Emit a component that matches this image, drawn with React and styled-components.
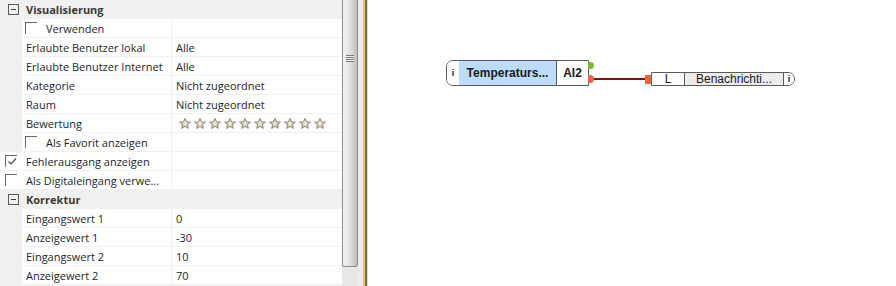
import React from "react";
import styled, { createGlobalStyle } from "styled-components";

const GlobalStyle = createGlobalStyle`
  html, body {
    margin: 0;
    padding: 0;
    background: #ffffff;
    overflow: hidden;
  }
  body {
    font-family: "Open Sans", "Noto Sans", sans-serif;
  }
`;

const Page = styled.div`
  display: flex;
  width: 896px;
  height: 286px;
  overflow: hidden;
`;

const Grid = styled.div`
  width: 342px;
  height: 286px;
  background: #f0f0f0;
  display: flex;
  flex-direction: column;
  font-size: 11px;
  color: #1e1e2a;
`;

const CategoryRow = styled.div`
  height: 19px;
  display: flex;
  align-items: center;
  flex-shrink: 0;
`;

const Toggle = styled.span`
  width: 9px;
  height: 9px;
  margin: 0 7px 0 8px;
  border: 1px solid #5a5a5a;
  position: relative;
  &::after {
    content: "";
    position: absolute;
    left: 2px;
    right: 2px;
    top: 4px;
    height: 1px;
    background: #3a3a3a;
  }
`;

const CategoryTitle = styled.span`
  font-weight: 700;
  color: #3b3935;
`;

const Row = styled.div`
  height: 19px;
  display: flex;
  flex-shrink: 0;
`;

const Indent = styled.div`
  width: ${(p) => (p.$top ? 0 : 22)}px;
  background: #f0f0f0;
`;

const NameCell = styled.div`
  width: ${(p) => (p.$top ? 172 : 150)}px;
  height: 19px;
  box-sizing: border-box;
  border-right: 1px solid #f0f0f0;
  border-bottom: 1px solid #f0f0f0;
  background: #ffffff;
  display: flex;
  align-items: center;
  padding-left: ${(p) => p.$pad}px;
  white-space: nowrap;
  overflow: hidden;
`;

const ValueCell = styled.div`
  flex: 1;
  height: 19px;
  box-sizing: border-box;
  border-bottom: 1px solid #f0f0f0;
  background: #ffffff;
  display: flex;
  align-items: center;
  padding-left: 4px;
`;

const Check = styled.span`
  width: 11px;
  height: 11px;
  border-top: 1px solid #6a6a6a;
  border-left: 1px solid #6a6a6a;
  margin-right: ${(p) => p.$gap}px;
  display: flex;
  align-items: center;
  justify-content: center;
  flex-shrink: 0;
`;

const Stars = styled.div`
  display: flex;
  gap: 3px;
  padding-left: 3px;
`;

const Scrollbar = styled.div`
  width: 16px;
  height: 286px;
  background: #e8e8e8;
  display: flex;
  flex-direction: column;
`;

const Thumb = styled.div`
  height: 269px;
  margin-top: -2px;
  box-sizing: border-box;
  border: 1px solid #8c8c8c;
  border-radius: 2px;
  background: linear-gradient(to right, #f3f3f3 0%, #e6e6e6 40%, #cfcfcf 75%, #bdbdbd 100%);
  display: flex;
  justify-content: center;
  padding-top: 56px;
`;

const Grip = styled.div`
  width: 8px;
  height: 7px;
  background: repeating-linear-gradient(to bottom, #7a7a7a 0 1px, #f0f0f0 1px 2px);
`;

const Splitter = styled.div`
  width: 10px;
  height: 286px;
  display: flex;
`;

const SplitPart = styled.div`
  width: ${(p) => p.$w}px;
  background: ${(p) => p.$c};
`;

const Canvas = styled.div`
  flex: 1;
  height: 286px;
  background: #ffffff;
  position: relative;
  font-family: "Liberation Sans", Arial, sans-serif;
  font-size: 12px;
  color: #1a1a1a;
`;

const Block = styled.div`
  position: absolute;
  left: ${(p) => p.$x}px;
  top: ${(p) => p.$y}px;
  height: ${(p) => p.$h}px;
  display: flex;
  border: 1px solid #5a5a5a;
  border-radius: ${(p) => p.$radius};
  overflow: hidden;
  box-sizing: border-box;
`;

const Section = styled.div`
  width: ${(p) => p.$w}px;
  background: ${(p) => p.$bg || "#ffffff"};
  border-left: ${(p) => (p.$divider ? "1px solid #5a5a5a" : "none")};
  display: flex;
  align-items: center;
  justify-content: center;
  font-weight: ${(p) => (p.$bold ? 700 : 400)};
  white-space: nowrap;
`;

const InfoDot = styled.span`
  font-weight: 700;
  font-size: 9px;
  font-family: "Liberation Sans", Arial, sans-serif;
`;

const Pin = styled.div`
  position: absolute;
  left: ${(p) => p.$x}px;
  top: ${(p) => p.$y}px;
  width: ${(p) => p.$w}px;
  height: ${(p) => p.$h}px;
  border-radius: ${(p) => p.$r};
  background: ${(p) => p.$c};
`;

const Wire = styled.div`
  position: absolute;
  left: ${(p) => p.$x}px;
  top: ${(p) => p.$y}px;
  width: ${(p) => p.$w}px;
  height: 2px;
  background: #8b0a0a;
`;

function Star() {
  return (
    <svg width="12" height="11" viewBox="0 0 24 22">
      <defs>
        <linearGradient id="sg" x1="0" y1="0" x2="0" y2="1">
          <stop offset="0" stopColor="#f4f2ec" />
          <stop offset="1" stopColor="#d9d5c8" />
        </linearGradient>
      </defs>
      <path
        d="M12 1 L14.9 7.6 L22.5 8.2 L16.7 13 L18.5 20.5 L12 16.5 L5.5 20.5 L7.3 13 L1.5 8.2 L9.1 7.6 Z"
        fill="url(#sg)"
        stroke="#9d967f"
        strokeWidth="2.4"
        strokeLinejoin="round"
      />
    </svg>
  );
}

function Tick() {
  return (
    <svg width="10" height="9" viewBox="0 0 10 9">
      <path d="M1.5 4.5 L4 7 L9 1.5" fill="none" stroke="#4a4a4a" strokeWidth="1.2" />
    </svg>
  );
}

const visual = [
  { name: "Verwenden", check: true },
  { name: "Erlaubte Benutzer lokal", value: "Alle" },
  { name: "Erlaubte Benutzer Internet", value: "Alle" },
  { name: "Kategorie", value: "Nicht zugeordnet" },
  { name: "Raum", value: "Nicht zugeordnet" },
  { name: "Bewertung", stars: true },
  { name: "Als Favorit anzeigen", check: true },
];

const korrektur = [
  { name: "Eingangswert 1", value: "0" },
  { name: "Anzeigewert 1", value: "-30" },
  { name: "Eingangswert 2", value: "10" },
  { name: "Anzeigewert 2", value: "70" },
];

function PropRow({ item }) {
  return (
    <Row>
      <Indent />
      <NameCell $pad={item.check ? 3 : 4}>
        {item.check && <Check $gap={9} />}
        {item.name}
      </NameCell>
      <ValueCell>
        {item.stars ? (
          <Stars>
            {Array.from({ length: 10 }).map((_, i) => (
              <Star key={i} />
            ))}
          </Stars>
        ) : (
          item.value
        )}
      </ValueCell>
    </Row>
  );
}

function TopRow({ name, checked }) {
  return (
    <Row>
      <Indent $top />
      <NameCell $top $pad={5}>
        <Check $gap={9}>{checked && <Tick />}</Check>
        {name}
      </NameCell>
      <ValueCell />
    </Row>
  );
}

export default function App() {
  return (
    <Page>
      <GlobalStyle />
      <Grid>
        <CategoryRow>
          <Toggle />
          <CategoryTitle>Visualisierung</CategoryTitle>
        </CategoryRow>
        {visual.map((item) => (
          <PropRow key={item.name} item={item} />
        ))}
        <TopRow name="Fehlerausgang anzeigen" checked />
        <TopRow name="Als Digitaleingang verwe..." />
        <CategoryRow>
          <Toggle />
          <CategoryTitle>Korrektur</CategoryTitle>
        </CategoryRow>
        {korrektur.map((item) => (
          <PropRow key={item.name} item={item} />
        ))}
      </Grid>
      <Scrollbar>
        <Thumb>
          <Grip />
        </Thumb>
      </Scrollbar>
      <Splitter>
        <SplitPart $w={5} $c="#ececec" />
        <SplitPart $w={2} $c="#f6c342" />
        <SplitPart $w={2} $c="#6e6e6e" />
        <SplitPart $w={1} $c="#d8d8d8" />
      </Splitter>
      <Canvas>
        <Block $x={78} $y={60} $h={26} $radius="7px 0 0 7px">
          <Section $w={12}>
            <InfoDot>i</InfoDot>
          </Section>
          <Section $w={97} $bg="#bcdcfc" $bold>
            Temperaturs...
          </Section>
          <Section $w={31} $divider $bold>
            AI2
          </Section>
        </Block>
        <Pin $x={220} $y={62} $w={6} $h={7} $r="0 4px 4px 0" $c="#7dbb2e" />
        <Pin $x={220} $y={75} $w={6} $h={8} $r="0 4px 4px 0" $c="#f06050" />
        <Wire $x={226} $y={78} $w={52} />
        <Pin $x={277} $y={75} $w={6} $h={9} $r="0" $c="#f0643c" />
        <Block $x={283} $y={72} $h={14} $radius="0 7px 7px 0">
          <Section $w={32}>L</Section>
          <Section $w={98} $divider $bg="#ececec">
            Benachrichti...
          </Section>
          <Section $w={10} $divider>
            <InfoDot>i</InfoDot>
          </Section>
        </Block>
      </Canvas>
    </Page>
  );
}
